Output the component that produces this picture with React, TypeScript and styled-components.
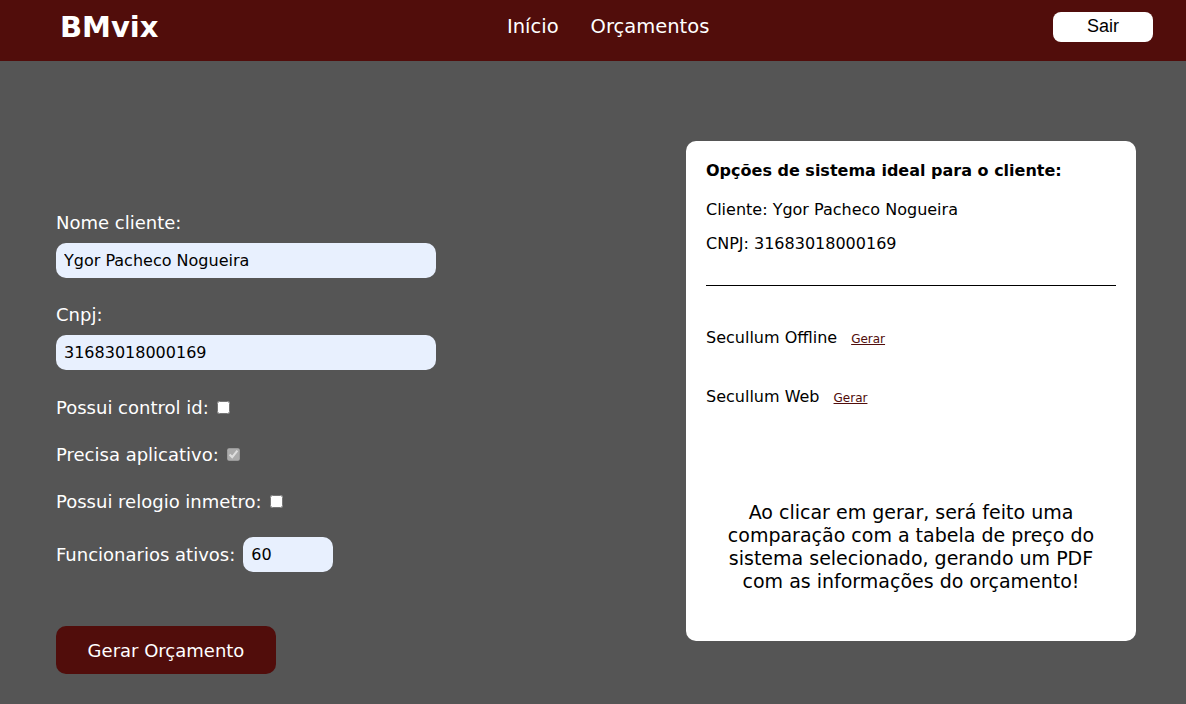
import React from 'react'
import styled, { createGlobalStyle } from 'styled-components'

const GlobalStyle = createGlobalStyle`
  html, body {
    margin: 0;
    padding: 0;
    background-color: #555555;
    font-family: "DejaVu Sans", Verdana, sans-serif;
  }
`;

const Header = styled.header`
  height: 61px;
  box-sizing: border-box;
  background-color: #510d0b;
  display: flex;
  align-items: center;
  justify-content: space-between;
  padding: 0 33px 8px 60px;
`;

const Logo = styled.h1`
  margin: 0;
  color: white;
  font-size: 29px;
  font-weight: bold;
  width: 447px;
`;

const Nav = styled.nav`
  display: flex;
  gap: 32px;
  flex: 1;
`;

const NavLink = styled.a`
  color: white;
  font-size: 19.5px;
  text-decoration: none;
`;

const LogoutButton = styled.button`
  width: 100px;
  height: 30px;
  border: none;
  border-radius: 8px;
  background-color: white;
  color: black;
  font-family: "Liberation Sans", Arial, sans-serif;
  font-size: 18px;
  cursor: pointer;
`;

const Main = styled.main`
  display: flex;
  justify-content: space-between;
  align-items: flex-start;
  padding: 80px 50px 0 56px;
`;

const Form = styled.form`
  display: flex;
  flex-direction: column;
  padding-top: 71px;
  color: white;
`;

const Label = styled.label`
  font-size: 18px;
  margin-bottom: 10px;
`;

const TextInput = styled.input<{ $width?: number }>`
  width: ${p => p.$width || 380}px;
  height: 35px;
  box-sizing: border-box;
  border: none;
  border-radius: 10px;
  background-color: #e8f0fe;
  padding: 0 8px;
  font-family: "DejaVu Sans", Verdana, sans-serif;
  font-size: 16px;
  color: black;
  outline: none;
`;

const Field = styled.div`
  display: flex;
  flex-direction: column;
  margin-bottom: 26px;
`;

const CheckRow = styled.div`
  display: flex;
  align-items: center;
  font-size: 18px;
  height: 20px;
  margin: 1px 0 26px 0;
`;

const Check = styled.input`
  margin: 0 0 0 8px;
  width: 13px;
  height: 13px;
`;

const InlineRow = styled.div`
  display: flex;
  align-items: center;
  gap: 8px;
  font-size: 18px;
`;

const SubmitButton = styled.button`
  margin-top: 54px;
  width: 220px;
  height: 48px;
  border: none;
  border-radius: 10px;
  background-color: #510d0b;
  color: white;
  font-family: "DejaVu Sans", Verdana, sans-serif;
  font-size: 18px;
  cursor: pointer;
`;

const Card = styled.section`
  width: 450px;
  height: 500px;
  box-sizing: border-box;
  background-color: white;
  border-radius: 10px;
  padding: 20px 20px;
  display: flex;
  flex-direction: column;
  color: black;
`;

const CardTitle = styled.h3`
  margin: 0 0 20px 0;
  font-size: 16px;
  font-weight: bold;
`;

const Info = styled.p`
  margin: 0 0 15px 0;
  font-size: 16px;
`;

const Divider = styled.div`
  border-bottom: 1px solid black;
  margin: 17px 0 42px 0;
`;

const Option = styled.div`
  display: flex;
  align-items: baseline;
  gap: 14px;
  font-size: 16px;
  margin-bottom: 40px;
`;

const GenerateLink = styled.a`
  color: #510d0b;
  font-size: 12px;
  text-decoration: underline;
  cursor: pointer;
`;

const Notice = styled.p`
  margin: auto 0 28px 0;
  text-align: center;
  font-size: 19px;
  line-height: 23px;
  padding: 0 8px;
`;

export default function App() {
  return (
    <>
      <GlobalStyle />
      <Header>
        <Logo>BMvix</Logo>
        <Nav>
          <NavLink>Início</NavLink>
          <NavLink>Orçamentos</NavLink>
        </Nav>
        <LogoutButton>Sair</LogoutButton>
      </Header>
      <Main>
        <Form onSubmit={e => e.preventDefault()}>
          <Field>
            <Label>Nome cliente:</Label>
            <TextInput defaultValue="Ygor Pacheco Nogueira" />
          </Field>
          <Field>
            <Label>Cnpj:</Label>
            <TextInput defaultValue="31683018000169" />
          </Field>
          <CheckRow>
            Possui control id:<Check type="checkbox" />
          </CheckRow>
          <CheckRow>
            Precisa aplicativo:<Check type="checkbox" defaultChecked disabled />
          </CheckRow>
          <CheckRow>
            Possui relogio inmetro:<Check type="checkbox" />
          </CheckRow>
          <InlineRow>
            Funcionarios ativos:
            <TextInput $width={90} defaultValue="60" />
          </InlineRow>
          <SubmitButton>Gerar Orçamento</SubmitButton>
        </Form>
        <Card>
          <CardTitle>Opções de sistema ideal para o cliente:</CardTitle>
          <Info>Cliente: Ygor Pacheco Nogueira</Info>
          <Info>CNPJ: 31683018000169</Info>
          <Divider />
          <Option>
            Secullum Offline <GenerateLink>Gerar</GenerateLink>
          </Option>
          <Option>
            Secullum Web <GenerateLink>Gerar</GenerateLink>
          </Option>
          <Notice>
            Ao clicar em gerar, será feito uma comparação com a tabela de preço do
            sistema selecionado, gerando um PDF com as informações do orçamento!
          </Notice>
        </Card>
      </Main>
    </>
  )
}
